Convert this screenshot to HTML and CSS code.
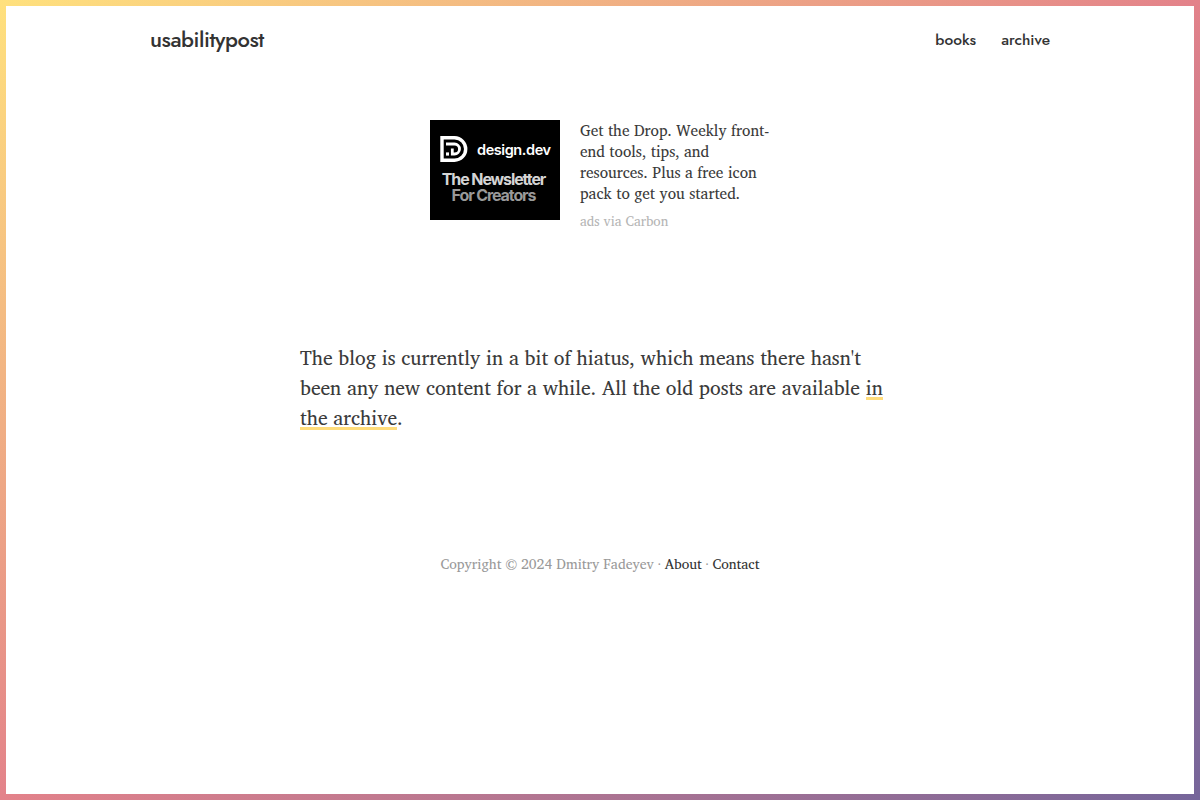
FILE: index.html
```
<!DOCTYPE html>
<html lang="en">
<head>
    <meta charset="UTF-8">
    <meta name="viewport" content="width=device-width, initial-scale=1.0">
    <title>usabilitypost</title>
    <link rel="stylesheet" href="styles.css">
</head>
<body>
    <div class="page">
        <header class="header">
            <a class="logo" href="/">usabilitypost</a>
            <nav class="nav">
                <a href="/books">books</a>
                <a href="/archive">archive</a>
            </nav>
        </header>
        <div class="ad">
            <a class="ad-image" href="#">
                <div class="ad-brand">
                    <svg width="28" height="26" viewBox="0 0 28 26" fill="none" stroke="#fff">
                        <path d="M2 1.8H14.5A11.2 11.2 0 0 1 14.5 24.2H2Z" stroke-width="3.4"/>
                        <path d="M6 8H14.5A5 5 0 0 1 14.5 18H12.3V12.5" stroke-width="2.8"/>
                        <path d="M6 18H9" stroke-width="3.2"/>
                    </svg>
                    <span>design.dev</span>
                </div>
                <div class="ad-title">The Newsletter<br><span class="ad-dim">For Creators</span></div>
            </a>
            <div class="ad-text">
                <p>Get the Drop. Weekly front-<br>end tools, tips, and<br>resources. Plus a free icon<br>pack to get you started.</p>
                <a class="ad-via" href="#">ads via Carbon</a>
            </div>
        </div>
        <main class="content">
            <p>The blog is currently in a bit of hiatus, which means there hasn't<br>been any new content for a while. All the old posts are available <a href="/archive">in<br>the archive</a>.</p>
        </main>
        <footer class="footer">
            Copyright © 2024 Dmitry Fadeyev · <a href="/about">About</a> · <a href="/contact">Contact</a>
        </footer>
    </div>
</body>
</html>
```
FILE: styles.css
```
* {
    box-sizing: border-box;
}
body {
    margin: 0;
    height: 100vh;
    padding: 6px;
    background: linear-gradient(to bottom right, #ffe17d, #e3828a, #75659a);
    font-family: "Charis SIL", "Liberation Serif", serif;
    color: #3a3a3a;
}
a {
    color: #333;
    text-decoration: none;
}
p {
    margin: 0;
}
.page {
    height: 100%;
    background: #fff;
}
.header {
    display: flex;
    justify-content: space-between;
    align-items: center;
    width: 900px;
    height: 68px;
    margin: 0 auto;
    font-family: Jost, Lato, sans-serif;
    font-weight: 500;
}
.logo {
    padding-bottom: 2px;
    font-size: 22px;
    letter-spacing: -0.44px;
}
.nav {
    display: flex;
    gap: 25px;
    padding-bottom: 2px;
    font-size: 15.5px;
}
.ad {
    display: flex;
    gap: 20px;
    width: 340px;
    margin: 46px auto 0;
}
.ad-image {
    flex: none;
    width: 130px;
    height: 100px;
    padding-top: 16px;
    background: #000;
    font-family: Inter, sans-serif;
}
.ad-brand {
    display: flex;
    align-items: center;
    gap: 9px;
    padding-left: 10px;
    height: 26px;
    color: #fff;
    font-size: 14.5px;
    font-weight: 600;
    letter-spacing: -0.42px;
}
.ad-title {
    margin-top: 9px;
    padding-right: 3px;
    text-align: center;
    font-size: 16px;
    line-height: 16px;
    font-weight: 700;
    letter-spacing: -1.1px;
    color: #d4d4d4;
}
.ad-dim {
    color: #999;
}
.ad-text {
    font-size: 15.35px;
    line-height: 21px;
    white-space: nowrap;
}
.ad-via {
    display: block;
    margin-top: 7px;
    font-size: 13.4px;
    color: #b5b5b5;
}
.content {
    width: 600px;
    margin: 111px auto 0;
    font-size: 19.6px;
    line-height: 30px;
    white-space: nowrap;
}
.content a {
    color: inherit;
    background: linear-gradient(#ffdc7a, #ffdc7a) 0 25px / 100% 3px no-repeat;
    box-decoration-break: clone;
    -webkit-box-decoration-break: clone;
}
.footer {
    margin-top: 121px;
    text-align: center;
    font-size: 13.85px;
    line-height: 20px;
    color: #999;
}
```
